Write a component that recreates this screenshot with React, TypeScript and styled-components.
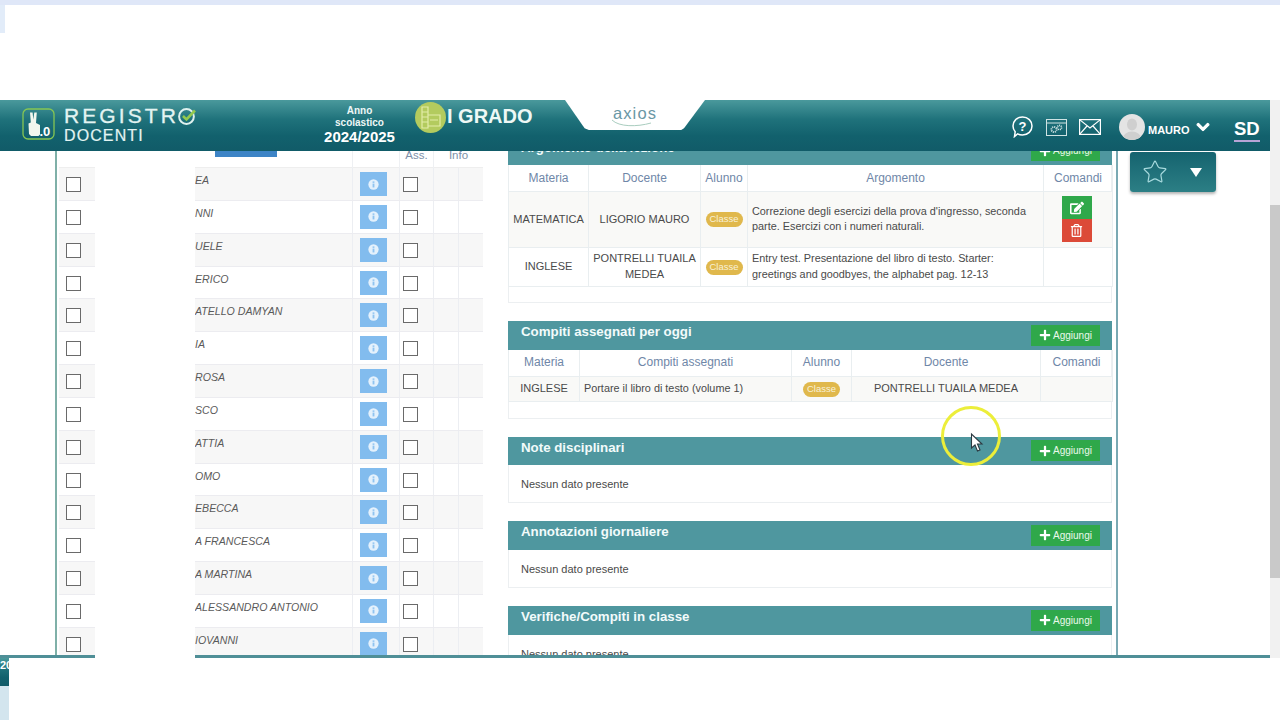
import React from 'react';
import styled, {createGlobalStyle} from 'styled-components';
import {FaChevronDown, FaEdit, FaPlus, FaRegTrashAlt} from 'react-icons/fa';
import {Star} from 'lucide-react';

const GlobalStyle = createGlobalStyle`
  html, body {
    margin: 0;
    padding: 0;
    background: #fff;
    overflow: hidden;
  }
  * {
    box-sizing: border-box;
  }
`;

const HEAD_GRADIENT = 'linear-gradient(#4a999c 0, #1f727b 38%, #12616d 70%, #115b68 100%)';

const Page = styled.div`
  position: relative;
  width: 1280px;
  height: 720px;
  display: flex;
  flex-direction: column;
  overflow: hidden;
  background: #fff;
  font-family: "Liberation Sans", Arial, sans-serif;
  color: #4a4a4a;
`;
const TopStrip = styled.div`
  height: 5px;
  background: #dfe7f8;
`;
const TopGap = styled.div`
  height: 95px;
`;
const TopTab = styled.div`
  width: 5px;
  height: 28px;
  background: #e2ecf9;
`;
const Frame = styled.div`
  display: flex;
  height: 558px;
`;
const Content = styled.div`
  width: 1270px;
  display: flex;
  flex-direction: column;
`;
const ScrollTrack = styled.div`
  width: 10px;
  padding-top: 105px;
  background: #f1f1f1;
`;
const ScrollThumb = styled.div`
  height: 373px;
  background: #c9c9c9;
`;

const Header = styled.header`
  height: 51px;
  flex: none;
  display: flex;
  align-items: flex-start;
  background: ${HEAD_GRADIENT};
  color: #fff;
`;
const LogoMark = styled.svg`
  width: 33px;
  height: 33px;
  margin: 8px 0 0 22px;
  flex: none;
`;
const Brand = styled.div`
  width: 133px;
  margin: 5px 0 0 9px;
  flex: none;
  display: flex;
  flex-direction: column;
  color: #e3f4f2;
`;
const BrandTop = styled.div`
  display: flex;
  align-items: center;
  height: 22px;
  font-size: 21px;
  letter-spacing: 3.1px;
  -webkit-text-stroke: 0.3px #e3f4f2;
`;
const BrandSub = styled.div`
  font-size: 16px;
  line-height: 17px;
  letter-spacing: 1.1px;
  -webkit-text-stroke: 0.2px #e3f4f2;
`;
const Year = styled.div`
  width: 71px;
  margin: 5px 0 0 127px;
  flex: none;
  text-align: center;
  font-size: 10px;
  font-weight: 700;
  line-height: 12px;
  color: #eef7f6;
`;
const YearValue = styled.div`
  font-size: 15px;
  line-height: 16px;
  color: #fff;
`;
const GradeBadge = styled.svg`
  width: 31px;
  height: 31px;
  margin: 2px 0 0 20px;
  flex: none;
`;
const Grade = styled.div`
  width: 85px;
  margin: 5px 0 0 1px;
  flex: none;
  font-size: 20px;
  font-weight: 700;
  line-height: 23px;
  white-space: nowrap;
  color: #eef8f6;
`;
const VendorTab = styled.div`
  width: 140px;
  height: 30px;
  margin-left: 33px;
  flex: none;
  display: flex;
  justify-content: center;
  background: #fff;
  clip-path: polygon(0 0, 100% 0, 85% 94%, 83% 100%, 17% 100%, 14% 94%);
`;
const VendorLogo = styled.svg`
  width: 52px;
  height: 24px;
  margin-top: 5px;
`;
const Tools = styled.div`
  height: 26px;
  margin: 14px 10px 0 auto;
  display: flex;
  align-items: center;
`;
const ToolIcon = styled.svg<{$gap: number}>`
  margin-left: ${({$gap}) => $gap}px;
  flex: none;
`;
const Avatar = styled.div`
  width: 26px;
  height: 26px;
  margin-left: 18px;
  border-radius: 50%;
  overflow: hidden;
  background: #e4e4e4;
  display: flex;
  justify-content: center;
`;
const UserName = styled.span`
  margin: 5px 7px 0 3px;
  font-size: 11px;
  font-weight: 700;
  width: 41px;
`;
const SchoolCode = styled.span`
  margin: 6px 0 0 24px;
  width: 26px;
  height: 24px;
  font-size: 18.5px;
  font-weight: 700;
  line-height: 22px;
  border-bottom: 2px solid #b7a4d6;
`;

const Main = styled.main`
  height: 504px;
  flex: none;
  display: flex;
  overflow: hidden;
  padding-left: 55px;
`;
const StudentsPanel = styled.section`
  width: 453px;
  flex: none;
  padding-left: 2px;
  border-left: 2px solid #7fb0a8;
  overflow: hidden;
`;
const StudentGrid = styled.div`
  width: 424px;
  display: grid;
  grid-template-columns: 36px 257px 47px 34px 25px 25px;
`;
const StudentHead = styled(StudentGrid)`
  height: 17px;
  color: #7d8fa8;
  font-size: 11.5px;
  text-align: center;
  border-bottom: 1px solid #eee;
`;
const HeadCell = styled.div`
  height: 17px;
  line-height: 8px;
  border-left: 1px solid #eef0f3;
`;
const WideHeadCell = styled(HeadCell)`
  grid-column: span 2;
`;
const SelectAllCell = styled.div`
  grid-column: span 2;
  padding-left: 156px;
`;
const SelectAll = styled.div`
  width: 62px;
  height: 6px;
  background: #3d84c6;
`;
const StudentRow = styled(StudentGrid)<{$odd: boolean}>`
  height: 32.85px;
  background: ${({$odd}) => ($odd ? '#f7f7f7' : '#fff')};
  border-bottom: 1px solid #ececf0;
`;
const Cell = styled.div`
  border-left: 1px solid #eceef2;
`;
const CheckCell = styled.div`
  padding: 9px 0 0 7px;
`;
const Box = styled.div`
  width: 15px;
  height: 15px;
  border: 1.5px solid #6a6a6a;
  background: #fff;
`;
const NameCell = styled.div`
  padding: 6px 0 0 100px;
  font-size: 10.6px;
  line-height: 13px;
  font-style: italic;
  color: #5a5a5a;
  white-space: nowrap;
`;
const InfoCell = styled(Cell)`
  padding: 4px 0 0 7px;
`;
const InfoButton = styled.div`
  width: 27px;
  height: 24px;
  display: flex;
  align-items: center;
  justify-content: center;
  background: #82bcee;
`;
const AssCell = styled(Cell)`
  padding: 9px 0 0 3px;
`;

const DetailsPanel = styled.section`
  width: 610px;
  flex: none;
  padding-right: 4px;
  border-right: 2px solid #7aa9b3;
  overflow: hidden;
`;
const DetailsInner = styled.div`
  width: 604px;
  margin-top: -14.5px;
  display: flex;
  flex-direction: column;
  gap: 18px;
`;
const Card = styled.div`
  border: 1px solid #eceff1;
  border-top: 0;
  background: #fff;
`;
const CardHead = styled.div`
  height: 28.5px;
  margin: 0 -1px;
  padding: 0 12px 0 13px;
  display: flex;
  align-items: flex-start;
  justify-content: space-between;
  background: #4f979f;
`;
const CardTitle = styled.h3`
  margin: 3px 0 0;
  font-size: 13.3px;
  line-height: 16px;
  font-weight: 700;
  color: #f2fbfb;
`;
const AddButton = styled.div`
  width: 69px;
  height: 21px;
  margin-top: 3.5px;
  display: flex;
  align-items: center;
  justify-content: center;
  gap: 2px;
  background: #2fa84a;
  color: #eaf8ec;
  font-size: 10px;
`;
const EmptyBody = styled.div`
  height: 37.3px;
  padding: 13px 12px 0;
  font-size: 11px;
  line-height: 13px;
`;
const DataTable = styled.table`
  width: 604px;
  margin-left: -1px;
  table-layout: fixed;
  border-collapse: collapse;
  font-size: 11px;
  line-height: 15.5px;
`;
const Th = styled.th`
  height: 26.5px;
  padding: 1px 0 0;
  font-size: 12px;
  font-weight: 400;
  color: #6f87a8;
  border: 1px solid #e9eef0;
  border-top: 0;
`;
const Row = styled.tr<{$height: number; $odd?: boolean}>`
  height: ${({$height}) => $height}px;
  background: ${({$odd}) => ($odd ? '#f9f9f7' : '#fff')};
`;
const Td = styled.td`
  padding: 0 4px;
  text-align: center;
  border: 1px solid #e9eef0;
`;
const TextTd = styled(Td)`
  padding-right: 14px;
  text-align: left;
  font-size: 10.85px;
`;
const Badge = styled.span`
  display: inline-block;
  width: 37px;
  height: 15px;
  border-radius: 8px;
  background: #e0b84c;
  color: #f8f1d8;
  font-size: 9.5px;
  line-height: 14px;
  text-align: center;
`;
const TableSpacer = styled.div<{$height: number}>`
  height: ${({$height}) => $height}px;
`;
const CommandStack = styled.div`
  width: 30px;
  margin-left: 13.5px;
  display: flex;
  flex-direction: column;
`;
const CommandButton = styled.div<{$color: string}>`
  height: 23px;
  display: flex;
  align-items: center;
  justify-content: center;
  background: ${({$color}) => $color};
  color: #fff;
`;

const Side = styled.aside`
  padding: 1px 0 0 12px;
`;
const FavButton = styled.div`
  width: 86px;
  height: 40px;
  padding-left: 12px;
  display: flex;
  align-items: center;
  border-radius: 3px;
  background: linear-gradient(#15636f, #2c7f85);
  box-shadow: 0 2px 3px rgba(0, 0, 0, 0.3);
  color: #a8dade;
`;
const Caret = styled.div`
  width: 0;
  height: 0;
  margin-left: 22px;
  border-left: 6.5px solid transparent;
  border-right: 6.5px solid transparent;
  border-top: 9px solid #fff;
`;
const FooterLine = styled.div`
  height: 3px;
  flex: none;
  background: #4f8f97;
`;
const Footer = styled.footer`
  height: 62px;
  display: flex;
  background: #fff;
`;
const FooterEdge = styled.div`
  width: 9px;
  overflow: hidden;
  background: #d3e5ee;
`;
const FooterChip = styled.div`
  height: 28px;
  padding-top: 1px;
  background: ${HEAD_GRADIENT};
  color: #fff;
  font-size: 11px;
  font-weight: 700;
  white-space: nowrap;
`;
// privacy patch over the surnames, it runs down over the footer line too
const Redaction = styled.div`
  position: absolute;
  left: 95px;
  top: 151px;
  width: 100px;
  height: 509px;
  background: #fff;
`;
const CursorMark = styled.svg`
  position: absolute;
  left: 938px;
  top: 402px;
  width: 66px;
  height: 66px;
`;

const students = [
  'EA', 'NNI', 'UELE', 'ERICO', 'ATELLO DAMYAN', 'IA', 'ROSA', 'SCO', 'ATTIA', 'OMO',
  'EBECCA', 'A FRANCESCA', 'A MARTINA', 'ALESSANDRO ANTONIO', 'IOVANNI',
];

function InfoGlyph() {
  return (
    <svg width="11" height="11" viewBox="0 0 12 12">
      <circle cx="6" cy="6" r="5.6" fill="#e4f1fc" />
      <rect x="5" y="5" width="2" height="4.2" fill="#8fc3f0" />
      <rect x="5" y="2.6" width="2" height="1.6" fill="#8fc3f0" />
    </svg>
  );
}

function Add() {
  return (
    <AddButton>
      <FaPlus size={12} color="#fff" />
      Aggiungi
    </AddButton>
  );
}

function EmptyCard({title}: Record<'title', string>) {
  return (
    <Card>
      <CardHead>
        <CardTitle>{title}</CardTitle>
        <Add />
      </CardHead>
      <EmptyBody>Nessun dato presente</EmptyBody>
    </Card>
  );
}

function Columns({widths}: Record<'widths', number[]>) {
  return (
    <colgroup>
      {widths.map((w, i) => <col key={i} width={w} />)}
    </colgroup>
  );
}

export default function App() {
  return (
    <Page>
      <GlobalStyle />
      <TopStrip />
      <TopGap><TopTab /></TopGap>
      <Frame>
        <Content>
          <Header>
            <LogoMark viewBox="0 0 33 33">
              <rect x="1" y="1" width="31" height="30" rx="5" fill="none" stroke="#86c653" strokeWidth="1.3" />
              <path d="M8 4.5 L10.6 4.5 L11.3 11.5 L12.3 4.5 L14.8 4.5 L14 15 L18 17 L18 26.5 L16.5 28 L9 28 L7 26 L6.5 15.5 L8.8 14.5 Z" fill="#f2f7ee" />
              <text x="17.5" y="28" fontFamily="Liberation Sans" fontSize="13" fontWeight="700" fill="#fff">.0</text>
            </LogoMark>
            <Brand>
              <BrandTop>
                REGISTR
                <svg width="20" height="20" viewBox="0 0 20 20" style={{marginLeft: -2}}>
                  <circle cx="9.5" cy="10.5" r="7.4" fill="none" stroke="#dff1ef" strokeWidth="2" />
                  <path d="M6 10 L9.5 13.5 L18 4.5" fill="none" stroke="#93c94f" strokeWidth="2.6" />
                </svg>
              </BrandTop>
              <BrandSub>DOCENTI</BrandSub>
            </Brand>
            <Year>
              Anno
              <br />
              scolastico
              <YearValue>2024/2025</YearValue>
            </Year>
            <GradeBadge viewBox="0 0 31 31">
              <circle cx="15.5" cy="15.5" r="15.5" fill="#b3cb5e" />
              <path d="M7 5h6v21H7zM7 10h6M7 15h6M7 20h6M13 13h12v11H13zM15 18h8" fill="none" stroke="#e3eda8" strokeWidth="1.2" />
            </GradeBadge>
            <Grade>I GRADO</Grade>
            <VendorTab>
              <VendorLogo viewBox="0 0 52 24">
                <text x="26" y="14" textAnchor="middle" fontFamily="Liberation Sans" fontSize="16.5" letterSpacing="1.1" fill="#6a97a5">axios</text>
                <path d="M3 15 C10 22 28 22 42 18" fill="none" stroke="#a9cdbf" strokeWidth="1" />
              </VendorLogo>
            </VendorTab>
            <Tools>
              <ToolIcon $gap={0} width="21" height="22" viewBox="0 0 21 22" fill="none" stroke="#fff" strokeWidth="1.5">
                <path d="M10.5 1 C16 1 20 5 20 10 C20 15 16 19 10.5 19 C8.5 19 7 18.6 5.6 17.8 L2.5 20.5 L3.2 15.8 C1.8 14.2 1 12.2 1 10 C1 5 5 1 10.5 1 Z" />
                <text x="10.5" y="15" textAnchor="middle" fontFamily="Liberation Sans" fontSize="13" fontWeight="700" fill="#fff" stroke="none">?</text>
              </ToolIcon>
              <ToolIcon $gap={13} width="21" height="17" viewBox="0 0 21 17" fill="none" stroke="#cfe3e3" strokeWidth="1">
                <rect x="0.5" y="0.5" width="20" height="16" />
                <path d="M0.5 4 H20.5" />
                <circle cx="8" cy="10.5" r="2.6" strokeWidth="1.8" strokeDasharray="1.2 0.8" />
                <circle cx="13.5" cy="8.5" r="2.1" strokeWidth="1.6" strokeDasharray="1 0.7" />
              </ToolIcon>
              <ToolIcon $gap={12} width="22" height="16" viewBox="0 0 22 16" fill="none" stroke="#fff" strokeWidth="1.2">
                <rect x="0.6" y="0.6" width="20.8" height="14.8" />
                <path d="M0.6 0.6 L11 9 L21.4 0.6 M0.6 15.4 L8 7 M21.4 15.4 L14 7" />
              </ToolIcon>
              <Avatar>
                <svg width="26" height="26" viewBox="0 0 26 26">
                  <ellipse cx="13" cy="10.5" rx="5" ry="6" fill="#cfcfcf" />
                  <ellipse cx="13" cy="24" rx="9" ry="6.5" fill="#cfcfcf" />
                </svg>
              </Avatar>
              <UserName>MAURO</UserName>
              <FaChevronDown size={14} color="#fff" stroke="#fff" strokeWidth={40} />
              <SchoolCode>SD</SchoolCode>
            </Tools>
          </Header>
          <Main>
            <StudentsPanel>
              <StudentHead>
                <SelectAllCell><SelectAll /></SelectAllCell>
                <HeadCell />
                <HeadCell>Ass.</HeadCell>
                <WideHeadCell>Info</WideHeadCell>
              </StudentHead>
              {students.map((name, index) => (
                <StudentRow key={index} $odd={index % 2 === 0}>
                  <CheckCell><Box /></CheckCell>
                  <NameCell>{name}</NameCell>
                  <InfoCell><InfoButton><InfoGlyph /></InfoButton></InfoCell>
                  <AssCell><Box /></AssCell>
                  <Cell />
                  <Cell />
                </StudentRow>
              ))}
            </StudentsPanel>
            <DetailsPanel>
              <DetailsInner>
                <Card>
                  <CardHead>
                    <CardTitle>Argomento della lezione</CardTitle>
                    <Add />
                  </CardHead>
                  <DataTable>
                    <Columns widths={[80, 112, 47, 296, 69]} />
                    <thead>
                      <tr>
                        <Th>Materia</Th>
                        <Th>Docente</Th>
                        <Th>Alunno</Th>
                        <Th>Argomento</Th>
                        <Th>Comandi</Th>
                      </tr>
                    </thead>
                    <tbody>
                      <Row $height={55.5} $odd>
                        <Td>MATEMATICA</Td>
                        <Td>LIGORIO MAURO</Td>
                        <Td><Badge>Classe</Badge></Td>
                        <TextTd>Correzione degli esercizi della prova d'ingresso, seconda parte. Esercizi con i numeri naturali.</TextTd>
                        <Td>
                          <CommandStack>
                            <CommandButton $color="#2fa84a"><FaEdit size={14} /></CommandButton>
                            <CommandButton $color="#dc4a38"><FaRegTrashAlt size={13} /></CommandButton>
                          </CommandStack>
                        </Td>
                      </Row>
                      <Row $height={39.5}>
                        <Td>INGLESE</Td>
                        <Td>PONTRELLI TUAILA MEDEA</Td>
                        <Td><Badge>Classe</Badge></Td>
                        <TextTd>Entry test. Presentazione del libro di testo. Starter: greetings and goodbyes, the alphabet pag. 12-13</TextTd>
                        <Td />
                      </Row>
                    </tbody>
                  </DataTable>
                  <TableSpacer $height={15.2} />
                </Card>
                <Card>
                  <CardHead>
                    <CardTitle>Compiti assegnati per oggi</CardTitle>
                    <Add />
                  </CardHead>
                  <DataTable>
                    <Columns widths={[71, 212, 60, 189, 72]} />
                    <thead>
                      <tr>
                        <Th>Materia</Th>
                        <Th>Compiti assegnati</Th>
                        <Th>Alunno</Th>
                        <Th>Docente</Th>
                        <Th>Comandi</Th>
                      </tr>
                    </thead>
                    <tbody>
                      <Row $height={25} $odd>
                        <Td>INGLESE</Td>
                        <TextTd>Portare il libro di testo (volume 1)</TextTd>
                        <Td><Badge>Classe</Badge></Td>
                        <Td>PONTRELLI TUAILA MEDEA</Td>
                        <Td />
                      </Row>
                    </tbody>
                  </DataTable>
                  <TableSpacer $height={16} />
                </Card>
                <EmptyCard title="Note disciplinari" />
                <EmptyCard title="Annotazioni giornaliere" />
                <EmptyCard title="Verifiche/Compiti in classe" />
              </DetailsInner>
            </DetailsPanel>
            <Side>
              <FavButton>
                <Star size={26} strokeWidth={1.1} />
                <Caret />
              </FavButton>
            </Side>
          </Main>
          <FooterLine />
        </Content>
        <ScrollTrack><ScrollThumb /></ScrollTrack>
      </Frame>
      <Footer>
        <FooterEdge><FooterChip>20</FooterChip></FooterEdge>
      </Footer>
      <Redaction />
      <CursorMark viewBox="0 0 66 66">
        <circle cx="33" cy="34" r="28.5" fill="none" stroke="#ecee3a" strokeWidth="3" />
        <path d="M33.5 32 L33.5 46 L37 43 L39.5 49 L42 48 L39.5 42 L44 42 Z" fill="#fff" stroke="#2b3a42" strokeWidth="1.1" />
      </CursorMark>
    </Page>
  );
}
